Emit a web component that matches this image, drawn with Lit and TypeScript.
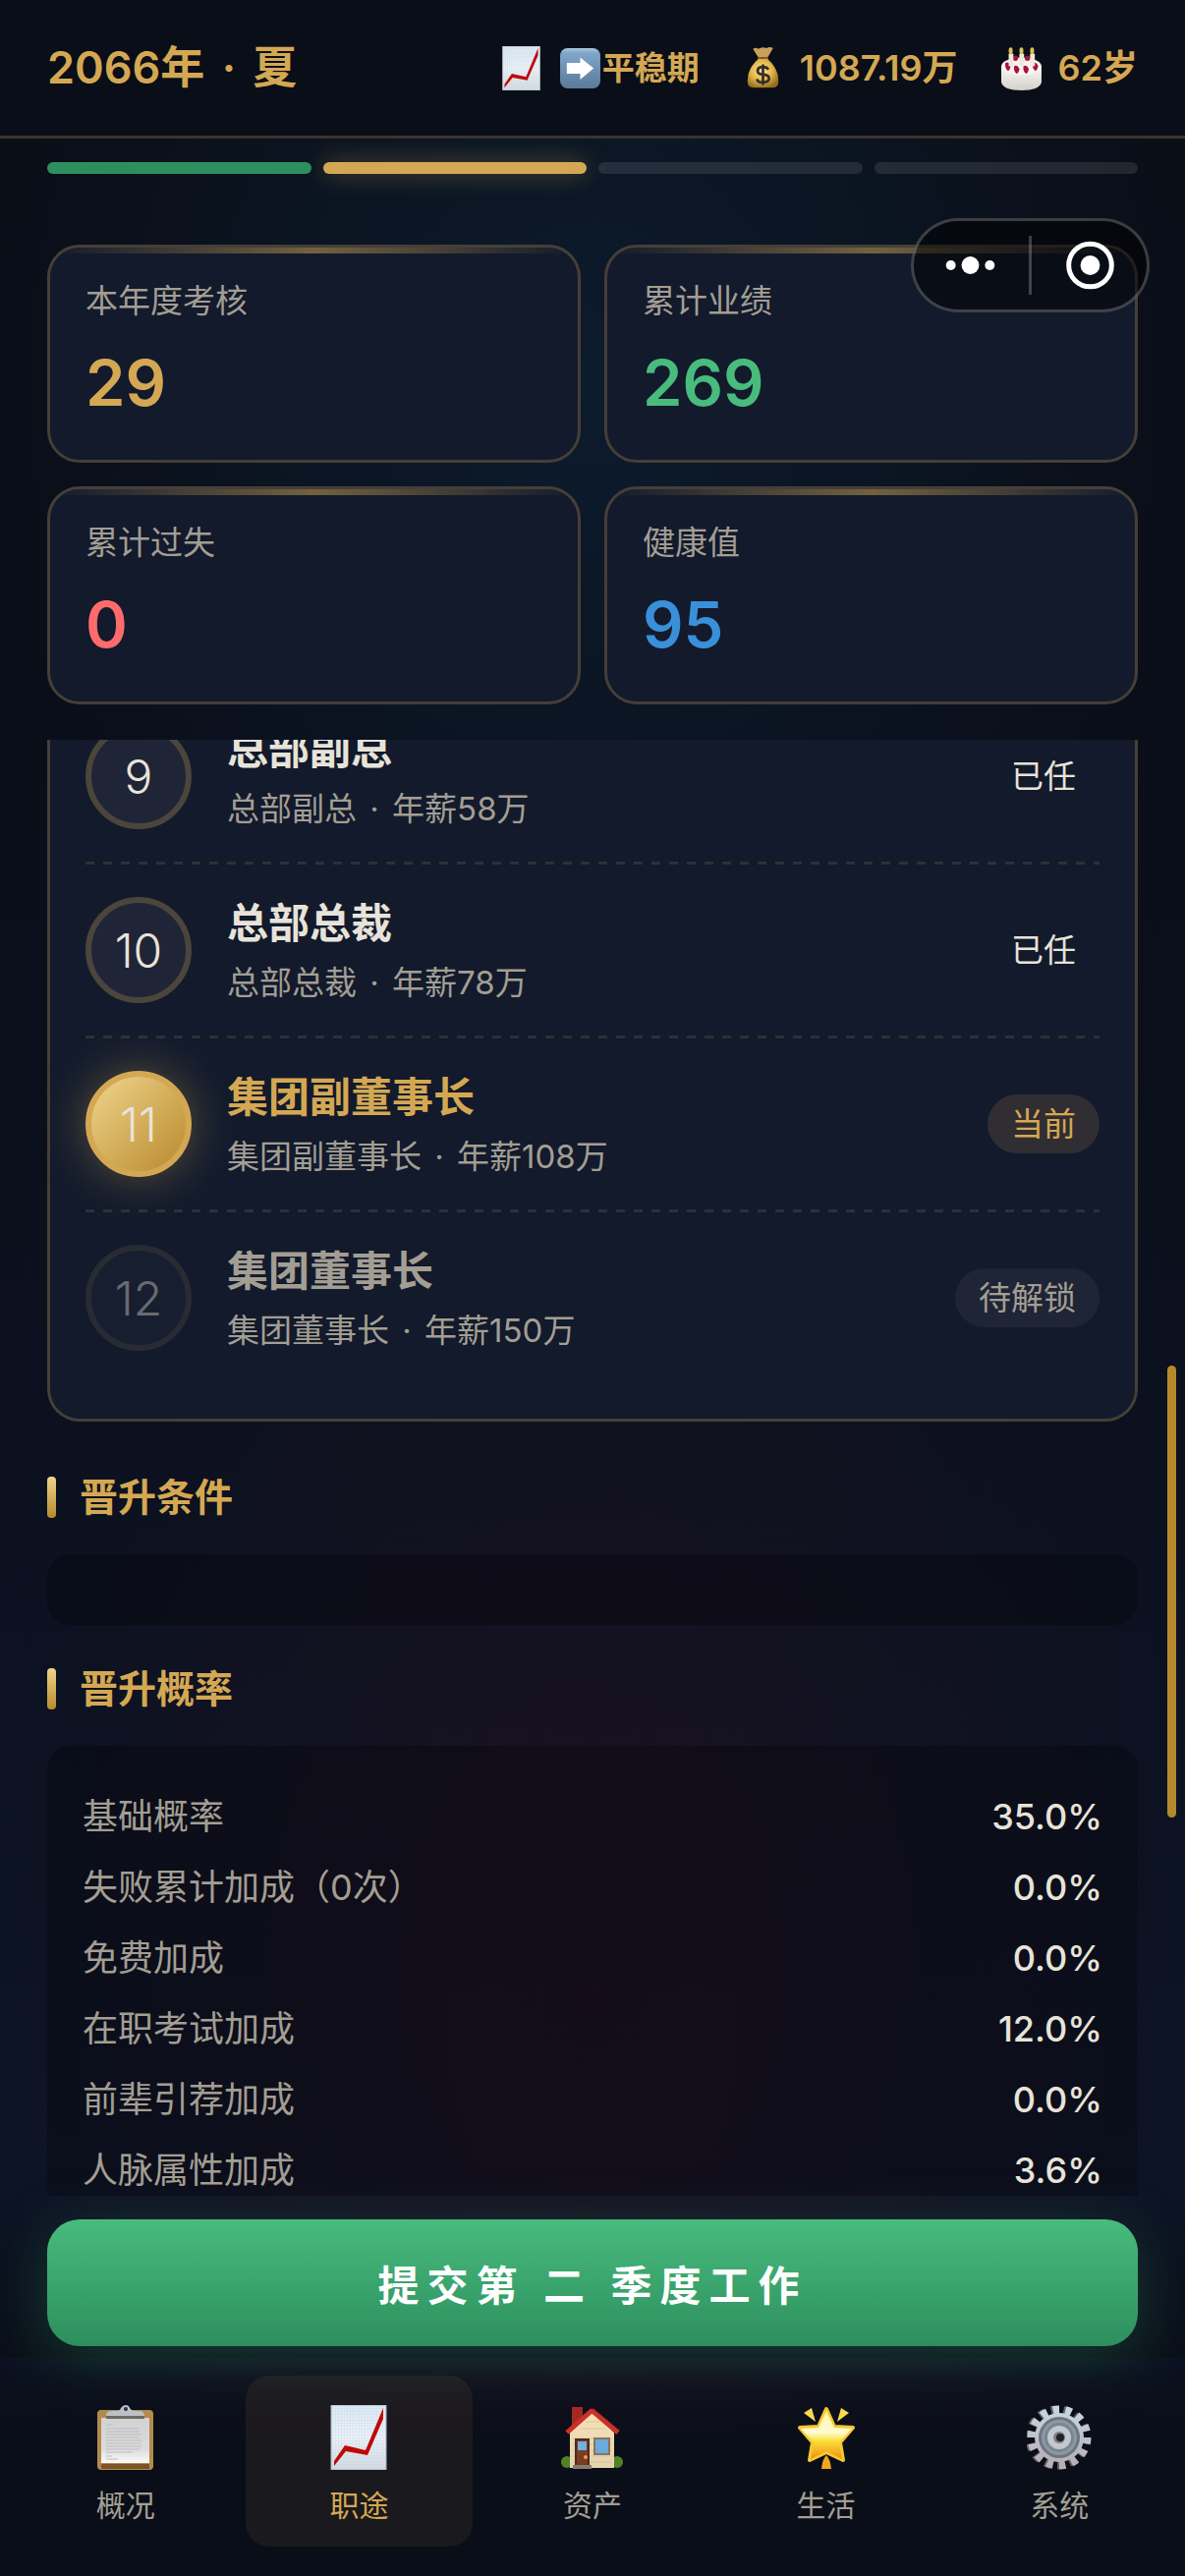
import { LitElement, css, html, nothing } from 'lit';
import type { TemplateResult } from 'lit';
import { customElement, state } from 'lit/decorators.js';
import { classMap } from 'lit/directives/class-map.js';
import { styleMap } from 'lit/directives/style-map.js';

type RankStatus = 'done' | 'current' | 'locked';

interface Rank {
	level: number;
	name: string;
	salary: string;
	status: RankStatus;
}

const STATUS_LABELS: Record<RankStatus, string> = {
	done: '已任',
	current: '当前',
	locked: '待解锁',
};

const QUARTERS = ['done', 'active', '', ''];

const STATS = [
	{ label: '本年度考核', value: '29', tone: 'gold' },
	{ label: '累计业绩', value: '269', tone: 'green' },
	{ label: '累计过失', value: '0', tone: 'red' },
	{ label: '健康值', value: '95', tone: 'blue' },
];

const RANKS: Rank[] = [
	{ level: 9, name: '总部副总', salary: '58万', status: 'done' },
	{ level: 10, name: '总部总裁', salary: '78万', status: 'done' },
	{ level: 11, name: '集团副董事长', salary: '108万', status: 'current' },
	{ level: 12, name: '集团董事长', salary: '150万', status: 'locked' },
];

const CHANCES = [
	['基础概率', '35.0%'],
	['失败累计加成（0次）', '0.0%'],
	['免费加成', '0.0%'],
	['在职考试加成', '12.0%'],
	['前辈引荐加成', '0.0%'],
	['人脉属性加成', '3.6%'],
];

const chartIcon = html`
  <svg viewBox="0 0 66 66" aria-hidden="true">
    <defs>
      <linearGradient id="paper" x1="0" y1="0" x2="0" y2="1">
        <stop offset="0" stop-color="#dfe9f3" />
        <stop offset="0.5" stop-color="#eef2f6" />
        <stop offset="1" stop-color="#d3dade" />
      </linearGradient>
      <pattern id="grid" width="3" height="3" patternUnits="userSpaceOnUse">
        <path d="M3 0H0V3" fill="none" stroke="#b9d3ea" stroke-width="1" />
      </pattern>
    </defs>
    <rect x="5" y="0" width="56" height="66" fill="url(#paper)" />
    <rect x="5" y="0" width="56" height="66" fill="url(#grid)" opacity="0.6" />
    <rect x="5" y="0" width="56" height="66" fill="none" stroke="#aab4c0" stroke-width="1" />
    <path d="M8 57 L19 41 L40 46 L58 3 L58 14 L42 51 L20 47 L8 62 Z" fill="#c00808" />
  </svg>
`;

const arrowIcon = html`
  <svg viewBox="0 0 66 66" aria-hidden="true">
    <defs>
      <linearGradient id="key" x1="0" y1="0" x2="0" y2="1">
        <stop offset="0" stop-color="#a9c6de" />
        <stop offset="0.12" stop-color="#7fa6cb" />
        <stop offset="1" stop-color="#5b7998" />
      </linearGradient>
    </defs>
    <rect x="3" y="3" width="60" height="60" rx="11" fill="url(#key)" />
    <path d="M13 25H33V17L53 33L33 50V41H13Z" fill="#fff" />
  </svg>
`;

const moneyIcon = html`
  <svg viewBox="0 0 66 66" aria-hidden="true">
    <defs>
      <radialGradient id="sack" cx="0.45" cy="0.4" r="0.65">
        <stop offset="0" stop-color="#ffe89a" />
        <stop offset="0.55" stop-color="#e0b546" />
        <stop offset="1" stop-color="#916a1c" />
      </radialGradient>
    </defs>
    <path
      d="M18 4Q22 1 26 4Q32 0 38 3Q44 0 48 3L40 17H26Z"
      fill="#c9a05a"
    />
    <path d="M26 15Q33 21 40 15L41 20Q33 24 25 20Z" fill="#8a6326" />
    <path
      d="M26 19H40Q57 34 56 53Q56 62 47 62H19Q10 62 10 53Q9 34 26 19Z"
      fill="url(#sack)"
    />
    <path d="M33 27V58M41 35Q39 31 33 31Q25 31 25 37Q25 42 33 42Q42 43 42 48Q42 54 33 54Q25 54 24 49" fill="none" stroke="#352f28" stroke-width="4" />
  </svg>
`;

const cakeIcon = html`
  <svg viewBox="0 0 66 66" aria-hidden="true">
    <defs>
      <linearGradient id="icing" x1="0" y1="0" x2="0" y2="1">
        <stop offset="0" stop-color="#fbf9f5" />
        <stop offset="1" stop-color="#d3cfc9" />
      </linearGradient>
    </defs>
    <path d="M3 30V54Q6 66 33 66Q60 66 63 54V30Z" fill="url(#icing)" />
    <ellipse cx="33" cy="30" rx="30" ry="13" fill="#f7f4ee" />
    <g fill="#a9123c">
      <circle cx="24" cy="18" r="4" />
      <circle cx="42" cy="18" r="4" />
      <path d="M9 25Q14 22 17 29Q16 36 13 37Q8 33 9 25Z" />
      <path d="M22 30Q27 27 30 34Q29 40 26 41Q21 38 22 30Z" />
      <path d="M36 30Q41 27 44 34Q43 40 40 41Q35 38 36 30Z" />
      <path d="M49 25Q54 22 58 29Q57 36 54 37Q49 33 49 25Z" />
    </g>
    <g fill="#efe9db">
      <rect x="14" y="11" width="7" height="19" rx="1" />
      <rect x="30" y="11" width="7" height="19" rx="1" />
      <rect x="46" y="11" width="7" height="19" rx="1" />
    </g>
    <g fill="#d9c25a">
      <ellipse cx="17" cy="7" rx="3" ry="5" />
      <ellipse cx="33" cy="7" rx="3" ry="5" />
      <ellipse cx="49" cy="7" rx="3" ry="5" />
    </g>
  </svg>
`;

const clipboardIcon = html`
  <svg viewBox="0 0 66 66" aria-hidden="true">
    <defs>
      <linearGradient id="sheet" x1="0" y1="0" x2="0" y2="1">
        <stop offset="0" stop-color="#d2d2d2" />
        <stop offset="0.7" stop-color="#dcdcdc" />
        <stop offset="1" stop-color="#fafafa" />
      </linearGradient>
    </defs>
    <rect x="4" y="5" width="57" height="61" rx="4" fill="#b38a4d" />
    <rect x="8" y="60" width="49" height="5" fill="#7b5527" />
    <rect x="8" y="13" width="49" height="46" fill="url(#sheet)" />
    <path
      d="M13 13V11Q13 6 19 6H25Q28 5 28 3Q30 0 33 0Q36 0 37 3Q38 5 41 6H46Q52 6 52 11V13Z"
      fill="#bcc1c8"
    />
    <rect x="13" y="11" width="39" height="3" fill="#6e6a64" />
    <circle cx="33" cy="4" r="2" fill="#2a303c" />
    <path
      d="M13 20H20M13 24H46M13 27H47M13 30H49M13 33H47M13 36H50M13 39H48M13 42H49M13 45H47M13 48H40M13 52H19M13 55H25"
      stroke="#bdbdbd"
      stroke-width="1"
    />
  </svg>
`;

const houseIcon = html`
  <svg viewBox="0 0 66 66" aria-hidden="true">
    <defs>
      <linearGradient id="wall" x1="0" y1="0" x2="0" y2="1">
        <stop offset="0" stop-color="#f7e2b9" />
        <stop offset="1" stop-color="#e5d3ae" />
      </linearGradient>
    </defs>
    <circle cx="7" cy="58" r="6" fill="#4f8426" />
    <circle cx="58" cy="58" r="6" fill="#4f8426" />
    <rect x="12" y="2" width="11" height="20" fill="#a32a22" />
    <path d="M33 6L55 28V64H10V28Z" fill="url(#wall)" />
    <path d="M12 34H53M12 40H53M12 46H53M12 52H53M12 58H53M20 24H46M26 17H40" stroke="#dcc69a" stroke-width="1" />
    <path d="M33 5L7 28" stroke="#cc3029" stroke-width="5" />
    <path d="M32 5L59 28" stroke="#cc3029" stroke-width="5" />
    <path d="M32 2L61 26" stroke="#3a2320" stroke-width="1" />
    <rect x="15" y="34" width="15" height="28" fill="#54291b" />
    <rect x="17" y="36" width="11" height="26" fill="#7a3c27" />
    <rect x="18" y="37" width="9" height="9" fill="#6fb2de" />
    <circle cx="26" cy="53" r="2" fill="#e0a93c" />
    <rect x="34" y="33" width="17" height="18" fill="#8d7358" />
    <rect x="36" y="35" width="13" height="14" fill="#69abdb" />
    <rect x="13" y="61" width="19" height="4" fill="#857d70" />
  </svg>
`;

const starIcon = html`
  <svg viewBox="0 0 66 66" aria-hidden="true">
    <defs>
      <linearGradient id="glow" x1="0" y1="0" x2="0" y2="1">
        <stop offset="0" stop-color="#fff6a8" />
        <stop offset="0.45" stop-color="#fffbd0" />
        <stop offset="0.62" stop-color="#fbe13a" />
        <stop offset="1" stop-color="#ee8f12" />
      </linearGradient>
    </defs>
    <path
      d="M33 4L41 22L60 23L47 38L50 56L33 48L16 56L19 38L6 23L25 22Z"
      fill="url(#glow)"
      stroke="#f8c832"
      stroke-width="4"
      stroke-linejoin="round"
    />
    <path d="M33 6L41 23L59 24L46 38L49 55L33 47L17 55L20 38L7 24L25 23Z" fill="url(#glow)" />
    <path d="M10 8L18 3L22 17Z" fill="#f5da4b" />
    <path d="M56 8L48 3L44 17Z" fill="#f5da4b" />
    <path d="M33 51Q37 55 38 65H28Q29 55 33 51Z" fill="#f2a51e" />
  </svg>
`;

const gearIcon = html`
  <svg viewBox="0 0 66 66" aria-hidden="true">
    <defs>
      <linearGradient id="steel" x1="0" y1="0" x2="0" y2="1">
        <stop offset="0" stop-color="#c5d4de" />
        <stop offset="1" stop-color="#b5afba" />
      </linearGradient>
    </defs>
    <circle cx="31" cy="33" r="28" fill="none" stroke="#6b625c" stroke-width="9" pathLength="140" stroke-dasharray="5 5" />
    <circle cx="33" cy="33" r="28" fill="none" stroke="url(#steel)" stroke-width="9" pathLength="140" stroke-dasharray="5 5" />
    <circle cx="33" cy="33" r="25" fill="url(#steel)" />
    <circle cx="33" cy="33" r="21" fill="#6b7681" />
    <circle cx="33" cy="33" r="18" fill="#8d98a1" />
    <circle cx="33" cy="33" r="15" fill="#7a8690" />
    <circle cx="33" cy="33" r="12" fill="#c2c8d2" />
    <circle cx="33" cy="33" r="6" fill="#857b76" />
    <circle cx="34" cy="33" r="4" fill="#1b2230" />
  </svg>
`;

const TABS: { label: string; icon: TemplateResult }[] = [
	{ label: '概况', icon: clipboardIcon },
	{ label: '职途', icon: chartIcon },
	{ label: '资产', icon: houseIcon },
	{ label: '生活', icon: starIcon },
	{ label: '系统', icon: gearIcon },
];

@customElement('app-root')
export class AppRoot extends LitElement {
	static override styles = [
		css`
      :host {
        --gold: #d4a853;
        --gold-dark: #b8892c;
        --gold-light: #f0d58c;
        --line: #463f37;
        --card: #121a2c;
        --text: #e8e3d9;
        --muted: #a39e93;
        --green: #48bb7d;
        --green-dark: #2d8f5e;

        display: block;
        color: var(--text);
        font-family: Inter, 'Noto Sans CJK SC', sans-serif;
        font-size: 33px;
      }

      * {
        box-sizing: border-box;
      }

      button {
        margin: 0;
        border: none;
        background: none;
        color: inherit;
        font-family: inherit;
        cursor: pointer;
      }

      svg {
        display: block;
        width: 100%;
        height: 100%;
      }

      .shell {
        position: relative;
        display: flex;
        flex-direction: column;
        height: 100vh;
        background:
          radial-gradient(ellipse 50% 28% at 50% 15%, rgba(14, 38, 62, 0.55), transparent),
          radial-gradient(ellipse 50% 36% at 50% 78%, rgba(36, 17, 32, 0.6), transparent),
          linear-gradient(180deg, #0a0e17 0%, #0a0e19 30%, #0d1426 85%, #0a0e19 100%);
      }

      .topbar {
        display: flex;
        align-items: center;
        justify-content: space-between;
        height: 141px;
        padding: 0 48px;
        border-bottom: 3px solid #3c3429;
        background: #0a0e18;
        color: var(--gold);
        font-weight: 600;
      }

      .date {
        margin: 0;
        font-size: 45px;
        font-weight: 600;
        line-height: 60px;
      }

      .date .dot {
        margin: 0 6px;
      }

      .facts {
        display: flex;
        gap: 42px;
      }

      .fact {
        display: flex;
        align-items: center;
        gap: 15px;
        font-size: 36px;
        line-height: 48px;
      }

      .fact .mood {
        display: flex;
        align-items: center;
        font-size: 33px;
      }

      .emoji {
        width: 45px;
        height: 45px;
      }

      .quarters {
        display: flex;
        gap: 12px;
        padding: 24px 48px 72px;
      }

      .quarter {
        flex: 1;
        height: 12px;
        border-radius: 6px;
        background: rgba(255, 255, 255, 0.1);
      }

      .quarter.done {
        background: var(--green-dark);
      }

      .quarter.active {
        background: var(--gold);
        box-shadow: 0 0 24px rgba(212, 168, 83, 0.4);
      }

      .stats {
        display: grid;
        grid-template-columns: 1fr 1fr;
        gap: 24px;
        margin: 0;
        padding: 0 48px 36px;
      }

      .stat {
        position: relative;
        overflow: hidden;
        padding: 30px 36px 36px;
        border: 3px solid var(--line);
        border-radius: 33px;
        background: var(--card);
      }

      .stat::before {
        content: '';
        position: absolute;
        top: 0;
        left: 0;
        right: 0;
        height: 6px;
        background: linear-gradient(90deg, transparent, var(--gold), transparent);
        opacity: 0.5;
      }

      .stat dt {
        color: var(--muted);
        line-height: 48px;
      }

      .stat dd {
        margin: 18px 0 0;
        font-size: 65px;
        font-weight: 600;
        line-height: 84px;
      }

      .gold {
        color: var(--gold);
      }

      .green {
        color: var(--green);
      }

      .red {
        color: #ff6b6b;
      }

      .blue {
        color: #3a8fd9;
      }

      .scroller {
        position: relative;
        flex: 1;
        min-height: 0;
        overflow: hidden;
        padding: 0 48px;
      }

      .thumb {
        position: absolute;
        right: 9px;
        width: 9px;
        border-radius: 5px;
        background: var(--gold-dark);
      }

      /* the list is scrolled part of the way past its first entry */
      .ranks {
        margin: -50px 0 48px;
        padding: 0 36px 36px;
        border: 3px solid var(--line);
        border-top: none;
        border-radius: 0 0 33px 33px;
        background: var(--card);
        list-style: none;
      }

      .rank {
        display: flex;
        align-items: center;
        gap: 36px;
        padding: 33px 0 36px;
        background: repeating-linear-gradient(90deg, #302f33 0 9px, transparent 9px 18px)
          bottom / 100% 3px no-repeat;
      }

      .rank:last-child {
        padding-bottom: 33px;
        background: none;
      }

      .level {
        display: flex;
        flex: none;
        align-items: center;
        justify-content: center;
        width: 108px;
        height: 108px;
        border: 6px solid #4b453c;
        border-radius: 50%;
        background: #1f2536;
        font-size: 48px;
        font-weight: 300;
      }

      .current .level {
        border-color: var(--gold);
        background: linear-gradient(135deg, var(--gold-light), var(--gold-dark));
        box-shadow: 0 0 48px rgba(212, 168, 83, 0.4);
      }

      .locked .level {
        opacity: 0.4;
      }

      .who {
        flex: 1;
        min-width: 0;
      }

      .who h3 {
        margin: 0 0 12px;
        font-size: 42px;
        font-weight: 600;
        line-height: 54px;
      }

      .who p {
        margin: 0;
        color: var(--muted);
        line-height: 42px;
      }

      .who .dot {
        margin: 0 4px;
      }

      .current h3 {
        color: var(--gold);
      }

      .locked h3 {
        color: var(--muted);
      }

      .badge {
        padding: 0 24px;
        border-radius: 30px;
        line-height: 60px;
      }

      .current .badge {
        background: #302e32;
        color: var(--gold);
      }

      .locked .badge {
        background: #1f2536;
        color: var(--muted);
      }

      .heading {
        display: flex;
        align-items: center;
        gap: 24px;
        margin: 0 0 30px;
        color: var(--gold);
        font-size: 39px;
        font-weight: 600;
        line-height: 57px;
      }

      .heading::before {
        content: '';
        width: 9px;
        height: 42px;
        border-radius: 4px;
        background: linear-gradient(180deg, var(--gold-light), var(--gold-dark));
      }

      .panel {
        margin: 0 0 36px;
        padding: 36px;
        border-radius: 24px;
        background: rgba(0, 0, 0, 0.25);
      }

      .chance {
        display: flex;
        justify-content: space-between;
        font-size: 36px;
        line-height: 72px;
      }

      .chance dt {
        color: var(--muted);
      }

      .chance dd {
        margin: 0;
        font-weight: 500;
      }

      .action {
        padding: 24px 48px 12px;
        background: linear-gradient(180deg, transparent, rgba(10, 14, 23, 0.8));
      }

      .submit {
        display: block;
        width: 100%;
        height: 129px;
        border-radius: 33px;
        background: linear-gradient(180deg, var(--green), var(--green-dark));
        box-shadow: 0 12px 60px rgba(45, 143, 94, 0.35);
        color: #fff;
        font-size: 42px;
        font-weight: 600;
        letter-spacing: 8px;
      }

      .tabs {
        position: relative;
        display: flex;
        gap: 6px;
        padding: 18px 12px 30px;
        background: linear-gradient(180deg, transparent, #0a0e18 40%);
      }

      .tab {
        display: flex;
        flex: 1;
        flex-direction: column;
        align-items: center;
        gap: 18px;
        padding: 30px 0 24px;
        border-radius: 24px;
        color: var(--muted);
        font-size: 30px;
        line-height: 36px;
      }

      .tab.selected {
        background: rgba(212, 168, 83, 0.08);
        color: var(--gold);
      }

      .tab .icon {
        width: 66px;
        height: 66px;
      }

      .capsule {
        position: absolute;
        top: 222px;
        right: 36px;
        display: flex;
        align-items: center;
        width: 243px;
        height: 96px;
        border: 3px solid rgba(255, 255, 255, 0.22);
        border-radius: 48px;
        background: rgba(0, 0, 0, 0.5);
      }

      .capsule button {
        flex: 1;
        height: 60px;
        padding: 0;
      }

      .capsule button + button {
        border-left: 3px solid rgba(255, 255, 255, 0.22);
      }
    `,
	];

	@state()
	private tab = '职途';

	@state()
	private scroll = { top: 43, size: 31 };

	private renderRank(rank: Rank) {
		return html`
      <li class="rank ${rank.status}">
        <span class="level">${rank.level}</span>
        <div class="who">
          <h3>${rank.name}</h3>
          <p>${rank.name}<span class="dot"> · </span>年薪${rank.salary}</p>
        </div>
        <span class="badge">${STATUS_LABELS[rank.status]}</span>
      </li>
    `;
	}

	private renderTab(tab: { label: string; icon: TemplateResult }) {
		const selected = tab.label === this.tab;
		return html`
      <button
        type="button"
        class=${classMap({ tab: true, selected })}
        aria-current=${selected ? 'page' : nothing}
        @click=${() => (this.tab = tab.label)}
      >
        <span class="icon">${tab.icon}</span>
        <span>${tab.label}</span>
      </button>
    `;
	}

	protected override render() {
		return html`
      <div class="shell">
        <header class="topbar">
          <h1 class="date">2066年<span class="dot"> · </span>夏</h1>
          <div class="facts">
            <div class="fact">
              <span class="emoji">${chartIcon}</span>
              <span class="mood"><span class="emoji">${arrowIcon}</span>平稳期</span>
            </div>
            <div class="fact"><span class="emoji">${moneyIcon}</span>1087.19万</div>
            <div class="fact"><span class="emoji">${cakeIcon}</span>62岁</div>
          </div>
        </header>
        <div class="quarters">
          ${QUARTERS.map((quarter) => html`<span class="quarter ${quarter}"></span>`)}
        </div>
        <dl class="stats">
          ${STATS.map(
						(stat) => html`
              <div class="stat">
                <dt>${stat.label}</dt>
                <dd class=${stat.tone}>${stat.value}</dd>
              </div>
            `,
					)}
        </dl>
        <main class="scroller">
          <ol class="ranks">
            ${RANKS.map((rank) => this.renderRank(rank))}
          </ol>
          <h2 class="heading">晋升条件</h2>
          <div class="panel"></div>
          <h2 class="heading">晋升概率</h2>
          <dl class="panel">
            ${CHANCES.map(
							([label, value]) => html`
                <div class="chance">
                  <dt>${label}</dt>
                  <dd>${value}</dd>
                </div>
              `,
						)}
          </dl>
          <span
            class="thumb"
            style=${styleMap({ top: `${this.scroll.top}%`, height: `${this.scroll.size}%` })}
          ></span>
        </main>
        <div class="action">
          <button class="submit" type="button">提交第 二 季度工作</button>
        </div>
        <nav class="tabs">${TABS.map((tab) => this.renderTab(tab))}</nav>
        <div class="capsule">
          <button type="button" aria-label="更多">
            <svg viewBox="0 0 118 60" fill="#fff">
              <circle cx="38" cy="30" r="5" />
              <circle cx="58" cy="30" r="9" />
              <circle cx="78" cy="30" r="5" />
            </svg>
          </button>
          <button type="button" aria-label="关闭">
            <svg viewBox="0 0 118 60">
              <circle cx="60" cy="30" r="22" fill="none" stroke="#fff" stroke-width="5" />
              <circle cx="60" cy="30" r="10" fill="#fff" />
            </svg>
          </button>
        </div>
      </div>
    `;
	}
}
